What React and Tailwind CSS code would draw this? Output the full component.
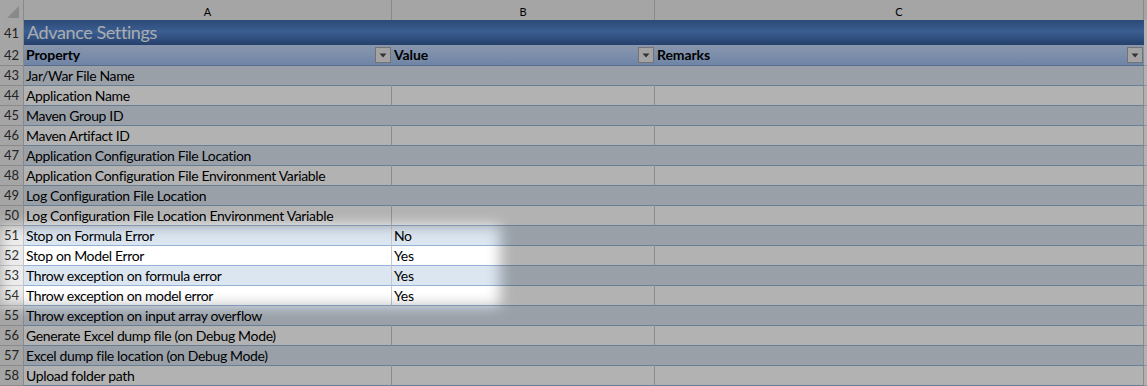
import React from "react";

const rows = [
  [43, "Jar/War File Name", ""],
  [44, "Application Name", ""],
  [45, "Maven Group ID", ""],
  [46, "Maven Artifact ID", ""],
  [47, "Application Configuration File Location", ""],
  [48, "Application Configuration File Environment Variable", ""],
  [49, "Log Configuration File Location", ""],
  [50, "Log Configuration File Location Environment Variable", ""],
  [51, "Stop on Formula Error", "No"],
  [52, "Stop on Model Error", "Yes"],
  [53, "Throw exception on formula error", "Yes"],
  [54, "Throw exception on model error", "Yes"],
  [55, "Throw exception on input array overflow", ""],
  [56, "Generate Excel dump file (on Debug Mode)", ""],
  [57, "Excel dump file location (on Debug Mode)", ""],
  [58, "Upload folder path", ""],
];

const cols = "grid grid-cols-[24px_368px_263px_489px_1fr]";

const FilterButton = () => (
  <div className="w-4 h-[16px] mr-px flex items-center justify-center bg-[#eaeaea] border border-[#a5a5a5]">
    <svg width="8" height="5" viewBox="0 0 8 5">
      <path d="M0.5 0.5h7L4 4.5z" fill="#4a4a4a" />
    </svg>
  </div>
);

const RowNumber = ({ n, className = "" }) => (
  <div
    className={`bg-[#ececec] border-r border-b border-[#c6c6c6] flex justify-center text-[13px] tracking-normal font-normal text-[#333] ${className}`}
  >
    {n}
  </div>
);

const DataRow = ({ n, label, value }) => {
  const striped = n % 2 === 1;
  const bg = striped ? "bg-[#dce6f1]" : "bg-white";
  const lineA =
    !striped || n === 51 || n === 53 ? "border-r-[#c8c8c8]" : "border-r-transparent";
  const lineB = striped ? "border-r-transparent" : "border-r-[#c8c8c8]";
  return (
    <div className={`${cols} h-[20px] leading-[19px]`}>
      <RowNumber n={n} className="leading-[19px]" />
      <div className={`${bg} border-b border-b-[#95b3d7] border-r ${lineA} pl-[2px] whitespace-nowrap`}>
        {label}
      </div>
      <div className={`${bg} border-b border-b-[#95b3d7] border-r ${lineB} pl-[2px]`}>
        {value}
      </div>
      <div className={`${bg} border-b border-b-[#95b3d7] border-r border-r-[#c8c8c8]`} />
      <div className="bg-white border-b border-[#d4d4d4]" />
    </div>
  );
};

export default function App() {
  return (
    <div className="relative w-[1147px] h-[386px] overflow-hidden bg-white [font-family:Lato,'Liberation_Sans',sans-serif] text-[14px] tracking-[-0.35px] text-black">
      {/* column letters */}
      <div className={`${cols} h-[20px] text-[11px] tracking-normal leading-[19px]`}>
        <div className="bg-[#ececec] border-r border-b border-[#c6c6c6] flex items-end justify-end pr-[4px] pb-[3px]">
          <svg width="12" height="12" viewBox="0 0 12 12">
            <path d="M12 0V12H0z" fill="#c4c4c4" />
          </svg>
        </div>
        <div className="bg-[#ececec] border-r border-b border-[#c6c6c6] text-center pt-[2px]">A</div>
        <div className="bg-[#ececec] border-r border-b border-[#c6c6c6] text-center pt-[2px]">B</div>
        <div className="bg-[#ececec] border-r border-b border-[#c6c6c6] text-center pt-[2px]">C</div>
        <div className="bg-[#ececec] border-b-2 border-[#2f8f4f]" />
      </div>

      {/* section title */}
      <div className={`${cols} h-[25px]`}>
        <RowNumber n={41} className="leading-[24px] pt-[1px]" />
        <div className="col-span-3 border-b border-[#263f68] bg-[linear-gradient(to_bottom,#3e6aaa,#5587d0_45%,#4674b8_72%,#365c98)] text-[18px] tracking-[-0.4px] leading-[24px] text-[#f2f6fc] pl-[3px]">
          Advance Settings
        </div>
        <div className="bg-white border-b border-[#d4d4d4]" />
      </div>

      {/* table header */}
      <div className={`${cols} h-[21px] font-bold tracking-[-0.1px] leading-[20px]`}>
        <RowNumber n={42} className="leading-[20px]" />
        {["Property", "Value", "Remarks"].map((h) => (
          <div
            key={h}
            className="flex items-center justify-between border-b border-[#7f9cc4] bg-[linear-gradient(to_bottom,#c5d8f8,#a0bfee)] pl-[2px]"
          >
            <span>{h}</span>
            <FilterButton />
          </div>
        ))}
        <div className="bg-white border-b border-[#d4d4d4]" />
      </div>

      {rows.map(([n, label, value]) => (
        <DataRow key={n} n={n} label={label} value={value} />
      ))}

      {/* dim layer with a soft-edged hole over rows 51-54 */}
      <div className="pointer-events-none absolute left-[-1000px] top-[-774px] w-[2500px] h-[2080px] border-[1000px] border-black/30 blur-[7px]" />
    </div>
  );
}
